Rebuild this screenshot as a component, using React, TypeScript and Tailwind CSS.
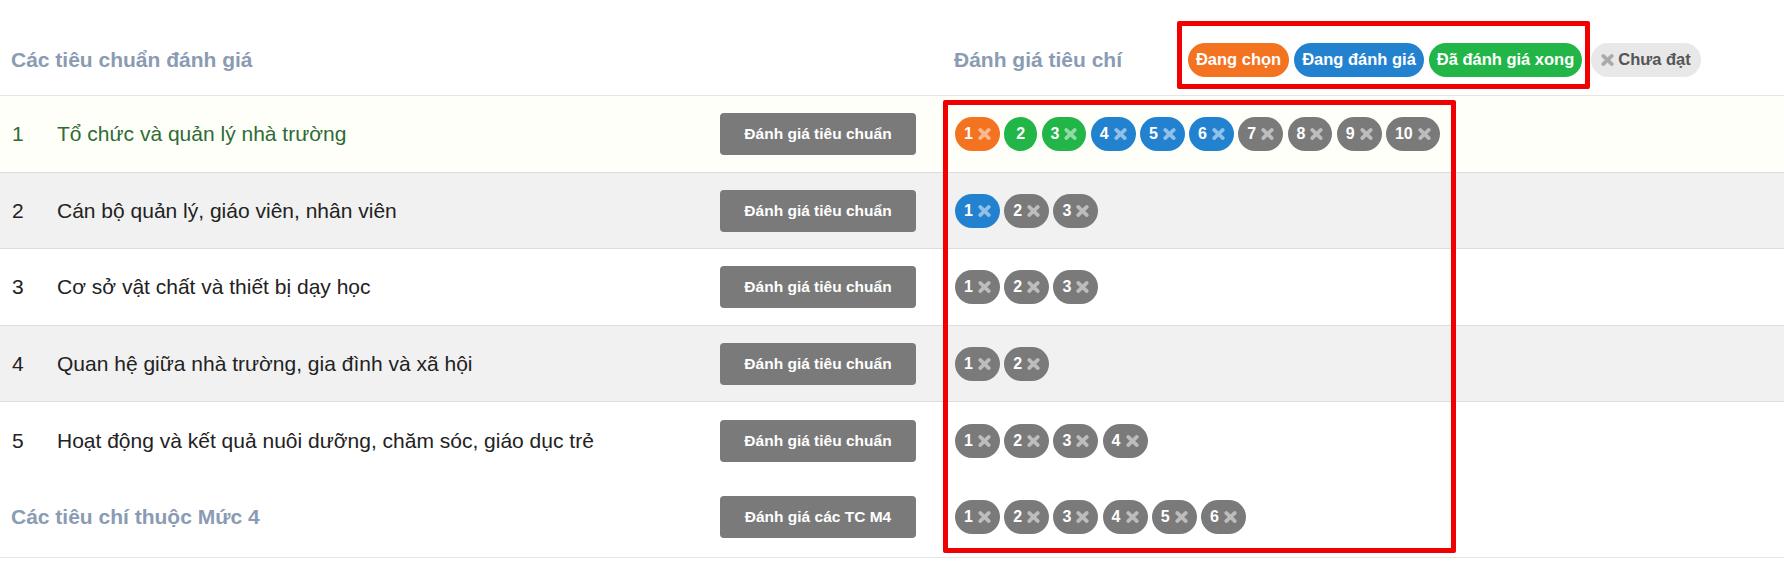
type Status = "selected" | "doing" | "done" | "none";

const statusColor: Record<Status, string> = {
  selected: "bg-[#f37321]",
  doing: "bg-[#2282d0]",
  done: "bg-[#22b648]",
  none: "bg-[#7a7a7a]",
};

const XIcon = ({ className }: { className: string }) => (
  <svg viewBox="0 0 13 12" className={`h-[12px] w-[13px] shrink-0 ${className}`} fill="none">
    <path d="M2.2 1.9 10.8 10.1M10.8 1.9 2.2 10.1" stroke="currentColor" strokeWidth="3.6" strokeLinecap="round" />
  </svg>
);

const Pill = ({ label, status, hideX }: { label: number; status: Status; hideX?: boolean }) => (
  <span
    className={`flex h-[34px] items-center justify-center rounded-[17px] text-[16px] font-bold text-white ${hideX ? "w-[33px]" : "px-[9px]"} ${statusColor[status]}`}
  >
    {label}
    {!hideX && <XIcon className="ml-[5px] text-white/50" />}
  </span>
);

const Pills = ({ items }: { items: Status[] }) => (
  <div className="flex gap-[4.3px]">
    {items.map((s, i) => (
      <Pill key={i} label={i + 1} status={s} hideX={i === 1 && s === "done"} />
    ))}
  </div>
);

const Button = ({ children }: { children: string }) => (
  <button className="h-[42px] w-[196px] rounded-[4px] bg-[#7a7a7a] text-[15.5px] font-bold text-white">
    {children}
  </button>
);

const rows: { no: number; name: string; items: Status[]; cls: string; height: string }[] = [
  {
    no: 1,
    name: "Tổ chức và quản lý nhà trường",
    items: ["selected", "done", "done", "doing", "doing", "doing", "none", "none", "none", "none"],
    cls: "bg-[#fdfff8] text-[#2f6b35] border-b",
    height: "h-[77px]",
  },
  {
    no: 2,
    name: "Cán bộ quản lý, giáo viên, nhân viên",
    items: ["doing", "none", "none"],
    cls: "bg-[#f1f1f1] text-[#222222] border-b",
    height: "h-[76px]",
  },
  {
    no: 3,
    name: "Cơ sở vật chất và thiết bị dạy học",
    items: ["none", "none", "none"],
    cls: "bg-white text-[#222222] border-b",
    height: "h-[77px]",
  },
  {
    no: 4,
    name: "Quan hệ giữa nhà trường, gia đình và xã hội",
    items: ["none", "none"],
    cls: "bg-[#f1f1f1] text-[#222222] border-b",
    height: "h-[76px]",
  },
  {
    no: 5,
    name: "Hoạt động và kết quả nuôi dưỡng, chăm sóc, giáo dục trẻ",
    items: ["none", "none", "none", "none"],
    cls: "bg-white text-[#222222]",
    height: "h-[77px]",
  },
];

export default function App() {
  return (
    <div className="relative h-[571px] w-full overflow-hidden bg-white font-['Liberation_Sans',Arial,sans-serif]">
      {/* header */}
      <div className="flex h-[96px] items-center border-b border-[#e5e5e5] pt-[24px]">
        <h3 className="w-[954px] pl-[11px] text-[21px] font-bold text-[#8a9bb3]">Các tiêu chuẩn đánh giá</h3>
        <h3 className="w-[234px] text-[21px] font-bold text-[#8a9bb3]">Đánh giá tiêu chí</h3>
        <div className="flex h-[34px] items-center gap-[5px] text-[16.5px] font-bold text-white">
          <span className="flex h-full w-[101px] items-center justify-center rounded-[17px] bg-[#f37321]">Đang chọn</span>
          <span className="flex h-full w-[130px] items-center justify-center rounded-[17px] bg-[#2282d0]">Đang đánh giá</span>
          <span className="flex h-full w-[153px] items-center justify-center rounded-[17px] bg-[#22b648]">Đã đánh giá xong</span>
          <span className="ml-[4px] flex h-full w-[110px] items-center justify-center gap-[4px] rounded-[17px] bg-[#e8e8e8] text-[#555555]">
            <XIcon className="text-[#aaaaaa]" />
            Chưa đạt
          </span>
        </div>
      </div>

      {rows.map((r) => (
        <div key={r.no} className={`flex items-center border-[#dddddd] ${r.height} ${r.cls}`}>
          <span className="w-[57px] pl-[12px] text-[21px]">{r.no}</span>
          <span className="w-[663px] text-[21px]">{r.name}</span>
          <Button>Đánh giá tiêu chuẩn</Button>
          <div className="ml-[39px]">
            <Pills items={r.items} />
          </div>
        </div>
      ))}

      <div className="flex h-[79px] items-center border-b border-[#e5e5e5] pb-[2px]">
        <h3 className="w-[720px] pl-[11px] text-[21px] font-bold text-[#8a9bb3]">Các tiêu chí thuộc Mức 4</h3>
        <Button>Đánh giá các TC M4</Button>
        <div className="ml-[39px]">
          <Pills items={["none", "none", "none", "none", "none", "none"]} />
        </div>
      </div>

      {/* red annotation boxes drawn on top of the screenshot */}
      <div className="absolute left-[1177px] top-[21px] h-[68px] w-[413px] rounded-[2px] border-[5px] border-[#f00000]" />
      <div className="absolute left-[943px] top-[100px] h-[453px] w-[513px] rounded-[2px] border-[5px] border-[#f00000]" />
    </div>
  );
}
